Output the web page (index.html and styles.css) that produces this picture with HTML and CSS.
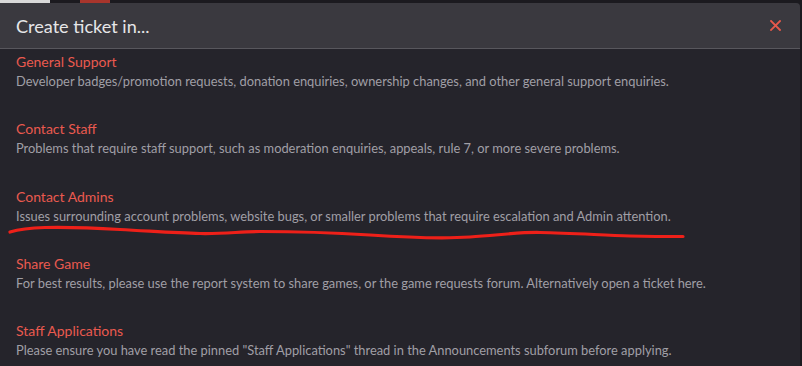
FILE: index.html
```html
<!DOCTYPE html>
<html lang="en">
<head>
<meta charset="utf-8">
<title>Create ticket in...</title>
<link rel="stylesheet" href="styles.css">
</head>
<body>
<div class="modal">
  <div class="modal-header">
    <h1 class="modal-title">Create ticket in...</h1>
    <button class="close" aria-label="Close">
      <svg width="11" height="11" viewBox="0 0 11 11"><path d="M1 1 L10 10 M10 1 L1 10" stroke="#e8584b" stroke-width="1.8" stroke-linecap="square" fill="none"/></svg>
    </button>
  </div>
  <div class="modal-body">
    <div class="item">
      <a class="item-title">General Support</a>
      <div class="item-desc">Developer badges/promotion requests, donation enquiries, ownership changes, and other general support enquiries.</div>
    </div>
    <div class="item">
      <a class="item-title">Contact Staff</a>
      <div class="item-desc">Problems that require staff support, such as moderation enquiries, appeals, rule 7, or more severe problems.</div>
    </div>
    <div class="item">
      <a class="item-title">Contact Admins</a>
      <div class="item-desc">Issues surrounding account problems, website bugs, or smaller problems that require escalation and Admin attention.</div>
    </div>
    <div class="item">
      <a class="item-title">Share Game</a>
      <div class="item-desc">For best results, please use the report system to share games, or the game requests forum. Alternatively open a ticket here.</div>
    </div>
    <div class="item">
      <a class="item-title">Staff Applications</a>
      <div class="item-desc">Please ensure you have read the pinned "Staff Applications" thread in the Announcements subforum before applying.</div>
    </div>
    <svg class="scribble" width="700" height="20" viewBox="0 0 700 20">
      <path d="M10 9 C 20 6, 30 5, 45 4.5 C 70 4, 95 5, 120 6.5 C 150 8, 175 10, 200 10.5 C 225 11, 240 8.5, 260 8.5 C 290 8.5, 330 9.5, 370 12 C 400 14, 440 16, 470 14 C 500 12, 520 9, 540 9.5 C 570 10, 600 12, 630 13 C 655 13.5, 670 13.5, 683 13.5" stroke="#ee2019" stroke-width="3.2" fill="none" stroke-linecap="round"/>
    </svg>
  </div>
</div>
</body>
</html>
```

FILE: styles.css
```css
html, body {
  margin: 0;
  padding: 0;
}
body {
  width: 802px;
  height: 366px;
  overflow: hidden;
  background:
    linear-gradient(90deg, #d9d9d9 0 50px, #1b1a1f 50px 80px, #a8352c 80px 110px, #1b1a1f 110px) top left / 100% 3px no-repeat,
    #1b1a1f;
  font-family: "Lato", "Open Sans", sans-serif;
}
.modal {
  margin-top: 3px;
  margin-left: -4px;
  width: 804px;
  height: 370px;
  border-radius: 4px;
  background: #25242b;
  overflow: hidden;
}
.modal-header {
  height: 45px;
  background: #3a393f;
  border-bottom: 1px solid #58575d;
  display: flex;
  align-items: center;
  justify-content: space-between;
  padding: 0 0 0 20px;
}
.modal-title {
  margin: 0;
  font-size: 18.1px;
  font-weight: 400;
  color: #e6e6e8;
  line-height: 24px;
}
.close {
  border: 0;
  background: none;
  padding: 0;
  margin-right: 19px;
  width: 11px;
  height: 11px;
  display: flex;
}
.modal-body {
  position: relative;
  padding: 4px 0 0 20px;
  display: flex;
  flex-direction: column;
  gap: 29.3px;
}
.item {
  display: flex;
  flex-direction: column;
}
.item-title {
  color: #ea5a4f;
  font-size: 14px;
  line-height: 18px;
}
.item-desc {
  color: #a09fa6;
  font-size: 12.86px;
  line-height: 20px;
}
.scribble {
  position: absolute;
  left: 4px;
  top: 174px;
}
```
